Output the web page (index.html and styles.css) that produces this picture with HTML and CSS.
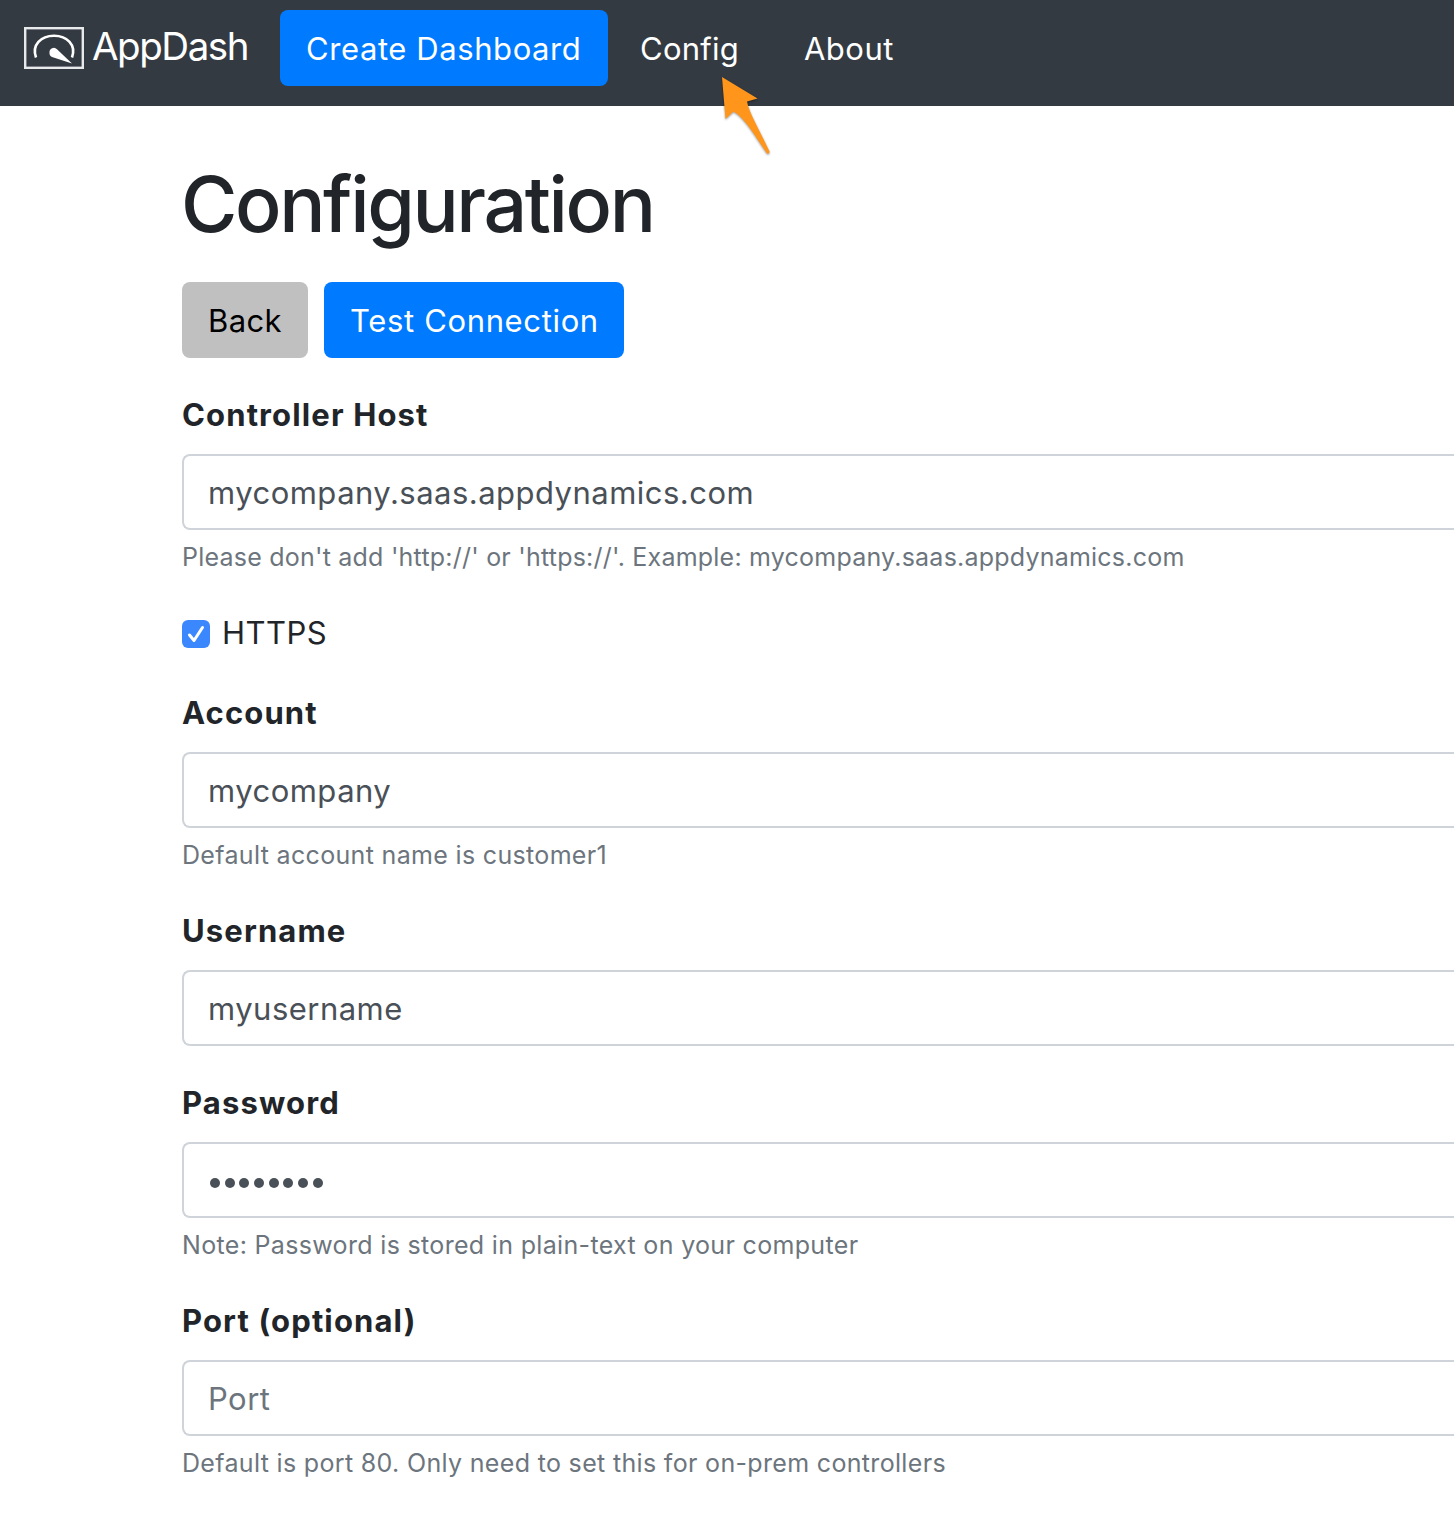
FILE: index.html
```html
<!DOCTYPE html>
<html lang="en">
<head>
<meta charset="utf-8">
<title>AppDash - Configuration</title>
<link rel="stylesheet" href="styles.css">
</head>
<body>
<nav class="navbar">
  <a class="brand">
    <svg class="brand-icon" width="60" height="44" viewBox="0 0 60 44" fill="none" stroke="#fff">
      <rect x="1.2" y="2.2" width="57.6" height="39.6" stroke="#e8e9ea" stroke-width="2.4"/>
      <path d="M12 31.500C7.500 19 17 9.800 30 9.800S52.500 19 48 31.500" stroke-width="2.600"/>
      <path d="M25.500 26.500a4.300 4.300 0 0 1 7.500-3.200L48 37.500 28 31a4.500 4.500 0 0 1-2.500-4.500z" fill="#fff" stroke="none"/>
    </svg>
    <span class="brand-name">AppDash</span>
  </a>
  <a class="btn primary create">Create Dashboard</a>
  <a class="nav-link config">Config
    <svg class="pointer" width="56" height="86" viewBox="0 0 56 86"><path d="M5 5L40.500 26.500 30 29.500C32 41 44 61 52.500 79.500Q52.500 82.500 50 81.500C40 67 28 46 16.500 39.500L8.500 47Z" fill="#ff951a"/></svg>
  </a>
  <a class="nav-link">About</a>
</nav>
<main class="page">
  <h1 class="title">Configuration</h1>
  <div class="actions">
    <button class="btn secondary">Back</button>
    <button class="btn primary test">Test Connection</button>
  </div>
  <form class="form">
    <div class="group">
      <label class="label">Controller Host</label>
      <div class="input">mycompany.saas.appdynamics.com</div>
      <small class="help wide">Please don't add 'http://' or 'https://'. Example: mycompany.saas.appdynamics.com</small>
    </div>
    <div class="group check">
      <svg class="checkbox" width="28" height="28" viewBox="0 0 28 28"><rect width="28" height="28" rx="6" fill="#3b87fd"/><path d="M7.500 15L12 20.500 20.500 7.500" fill="none" stroke="#fff" stroke-width="3" stroke-linecap="round" stroke-linejoin="round"/></svg>
      <span class="check-text">HTTPS</span>
    </div>
    <div class="group">
      <label class="label">Account</label>
      <div class="input">mycompany</div>
      <small class="help">Default account name is customer1</small>
    </div>
    <div class="group">
      <label class="label">Username</label>
      <div class="input">myusername</div>
    </div>
    <div class="group">
      <label class="label">Password</label>
      <div class="input password"><i></i><i></i><i></i><i></i><i></i><i></i><i></i><i></i></div>
      <small class="help">Note: Password is stored in plain-text on your computer</small>
    </div>
    <div class="group">
      <label class="label">Port (optional)</label>
      <div class="input placeholder">Port</div>
      <small class="help">Default is port 80. Only need to set this for on-prem controllers</small>
    </div>
  </form>
</main>
</body>
</html>
```
FILE: styles.css
```css
* { box-sizing: border-box; }
body { margin: 0; height: 1524px; overflow: hidden; background: #fff; color: #212529; font: 400 31px/48px Inter, "Liberation Sans", sans-serif; letter-spacing: .48px; white-space: nowrap; }
.navbar { display: flex; align-items: flex-start; height: 106px; padding: 10px 24px; background: #343a42; color: #fff; }
.brand { display: flex; width: 256px; padding-top: 15px; gap: 8px; }
.brand-icon { flex: none; margin-top: 1px; }
.brand-name { font-size: 38.5px; line-height: 43px; letter-spacing: -1.45px; }
.btn { display: flex; align-items: center; height: 76px; padding: 2px 0 0 26px; border: 0; border-radius: 8px; font: inherit; letter-spacing: .65px; }
.primary { background: #007bff; color: #fff; }
.secondary { width: 126px; background: #c0c0c0; color: #000; letter-spacing: .4px; }
.create { width: 328px; letter-spacing: .58px; }
.test { width: 300px; }
.nav-link { position: relative; padding: 15px 0 0 32px; width: 164px; }
.config { letter-spacing: .25px; }
.pointer { position: absolute; left: 109px; top: 62px; filter: drop-shadow(0 1px 1px rgba(0,0,0,.4)); }
.page { padding: 50px 0 0 182px; }
.title { margin: 0 0 30px -1px; font-size: 77px; line-height: 96px; font-weight: 500; letter-spacing: -2.4px; }
.actions { display: flex; gap: 16px; margin-bottom: 32px; }
.group { margin-bottom: 32px; }
.label { display: block; padding-top: 1px; margin-bottom: 15px; font-weight: 700; letter-spacing: 1.13px; }
.input { display: flex; align-items: center; height: 76px; padding: 2px 0 0 24px; border: 2px solid #ced4da; border-right: 0; border-radius: 8px 0 0 8px; color: #495057; }
.placeholder, .help { color: #6c757d; }
.help { display: block; margin-top: 8px; font-size: 25px; line-height: 38px; letter-spacing: .33px; }
.wide { letter-spacing: .22px; }
.check { display: flex; align-items: center; gap: 12px; height: 48px; }
.check-text { padding-top: 2px; }
.checkbox { flex: none; margin-top: 3px; }
.password { gap: 4.7px; padding: 6px 0 0 26px; }
.password i { width: 10px; height: 10px; border-radius: 50%; background: #495057; }
```
